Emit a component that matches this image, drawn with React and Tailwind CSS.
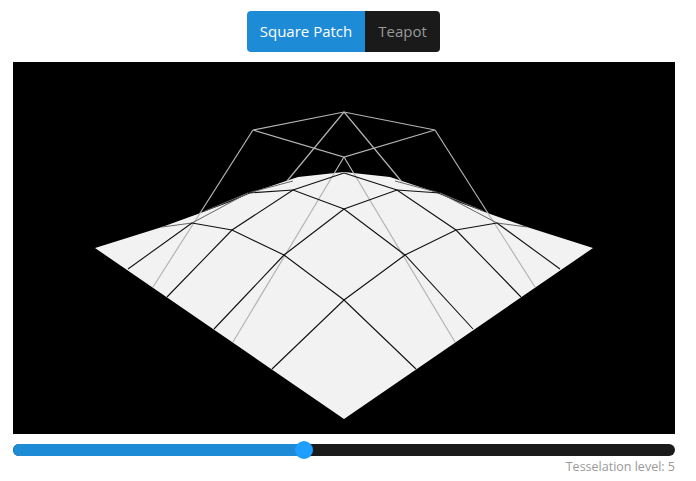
// Demo de tesselação: patch quadrado em wireframe + slider de nível
const SILHUETA = '95,248 162,227 195,215 230,202 253,192 298,177 344,172 390,177 435,192 458,202 493,215 527,227 593,248 344,419'

// polígono de controle (cinza, passa por cima da superfície)
const CONTROLE = [
  '253,130 344,112 435,130 344,157 253,130',
  '253,130 153,287',
  '435,130 535,287',
  '344,112 287,181',
  '344,112 402,182',
  '344,157 233,342',
  '344,157 455,342',
]

// linhas da malha tesselada
const MALHA = [
  '128,269 192,223',
  '167,297 232,230 293,190 344,173',
  '214,329 284,255 344,209 397,190 440,193',
  '272,369 344,300 405,255 456,230 497,223',
  '560,269 497,223',
  '521,297 456,230 397,190 344,173',
  '473,329 405,255 344,209 293,190 248,193',
  '416,369 344,300 284,255 232,230 192,223',
]

// trechos rentes à silhueta, onde a linha fica acinzentada
const RENTES = [
  '192,223 162,227',
  '192,223 248,193 293,181',
  '248,193 205,211',
  '497,223 527,227',
  '497,223 440,193 395,181',
  '440,193 483,211',
]

function Patch() {
  return (
    <svg viewBox="13 62 662 372" className="block w-[662px] h-[372px] bg-black">
      <polygon points={SILHUETA} fill="#f2f2f2" />
      {CONTROLE.map((p) => (
        <polyline key={p} points={p} fill="none" stroke="#b4b4b4" strokeWidth="1.2" />
      ))}
      {RENTES.map((p) => (
        <polyline key={p} points={p} fill="none" stroke="#666" strokeWidth="1" />
      ))}
      {MALHA.map((p) => (
        <polyline key={p} points={p} fill="none" stroke="#111" strokeWidth="1.1" />
      ))}
    </svg>
  )
}

export default function App() {
  return (
    <div className="w-[696px] h-[481px] bg-white pl-[13px] pr-[21px] pt-[11px] flex flex-col font-['Open_Sans',sans-serif]">
      <div className="flex justify-center">
        <div className="flex h-[41px] mr-px rounded overflow-hidden text-[15px]">
          <button className="w-[118px] bg-[#1e8bd6] text-white">Square Patch</button>
          <button className="w-[75px] bg-[#1a1a1a] text-[#999]">Teapot</button>
        </div>
      </div>
      <div className="mt-[10px]">
        <Patch />
      </div>
      <div className="relative mt-[10px] h-3 rounded-full bg-[#1a1a1a]">
        <div className="h-3 w-[291px] rounded-l-full bg-[#1e8bd6]" />
        <div className="absolute left-[282px] top-[-3px] w-[18px] h-[18px] rounded-full bg-[#1e9fff]" />
      </div>
      <div className="mt-[2px] text-right text-[12.5px] leading-[18px] text-[#999]">Tesselation level: 5</div>
    </div>
  )
}
